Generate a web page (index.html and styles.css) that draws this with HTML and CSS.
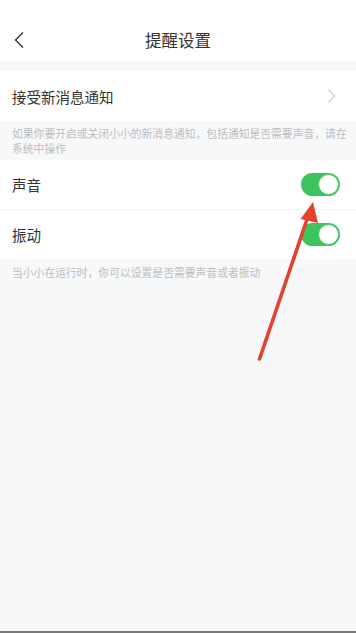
FILE: index.html
```html
<!DOCTYPE html>
<html lang="zh">
<head>
<meta charset="utf-8">
<link rel="stylesheet" href="styles.css">
</head>
<body>
<div class="page">
  <header class="nav">
    <svg class="back" width="12" height="18" viewBox="0 0 12 18"><path d="M10 1.5 L2.5 9 L10 16.5" fill="none" stroke="#333" stroke-width="1.4"/></svg>
    <div class="title">提醒设置</div>
  </header>
  <div class="gap"></div>
  <div class="row">
    <span class="label">接受新消息通知</span>
    <svg class="more" width="9" height="14" viewBox="0 0 9 14"><path d="M1.5 1 L7.5 7 L1.5 13" fill="none" stroke="#c9c9c9" stroke-width="1.1"/></svg>
  </div>
  <div class="note note-top">如果你要开启或关闭小小的新消息通知，包括通知是否需要声音，请在系统中操作</div>
  <div class="row row-line">
    <span class="label">声音</span>
    <span class="switch"><span class="knob"></span></span>
  </div>
  <div class="row">
    <span class="label">振动</span>
    <span class="switch"><span class="knob"></span></span>
  </div>
  <div class="note note-bottom">当小小在运行时，你可以设置是否需要声音或者振动</div>
  <svg class="arrow" width="356" height="633" viewBox="0 0 356 633">
    <line x1="259.5" y1="359" x2="307.5" y2="218" stroke="#e2432e" stroke-width="3.6" stroke-linecap="round"/>
    <polygon points="313,202 300.5,219 318,223" fill="#e2432e"/>
  </svg>
</div>
</body>
</html>
```
FILE: styles.css
```css
html, body {
  margin: 0;
  padding: 0;
}
body {
  width: 356px;
  height: 633px;
  overflow: hidden;
  background: #f7f8fa;
  font-family: "Noto Sans CJK SC", "Noto Sans", sans-serif;
}
.page {
  position: relative;
  height: 631px;
  border-bottom: 2px solid #7a7a7a;
  background: #f7f8fa;
}
.nav {
  position: relative;
  height: 61px;
  background: #fff;
  display: flex;
  align-items: flex-end;
  justify-content: center;
  box-sizing: border-box;
  padding-bottom: 10px;
}
.back {
  position: absolute;
  left: 13px;
  top: 31px;
}
.title {
  font-size: 16.5px;
  color: #333;
  line-height: 22px;
}
.gap {
  height: 10px;
}
.row {
  height: 49px;
  background: #fff;
  display: flex;
  align-items: center;
  justify-content: space-between;
  padding: 0 16px 0 12px;
}
.row:nth-of-type(2) {
  height: 50px;
}
.row-line {
  border-bottom: 1px solid #f2f2f2;
}
.label {
  font-size: 14.5px;
  color: #333;
}
.more {
  margin-right: 4px;
}
.note {
  font-size: 10.8px;
  color: #bdbdbd;
  line-height: 15px;
  padding: 0 8px 0 12px;
}
.note-top {
  height: 39px;
  box-sizing: border-box;
  padding-top: 5px;
}
.note-bottom {
  padding-top: 6px;
}
.switch {
  width: 39px;
  height: 23px;
  border-radius: 12px;
  background: #3cc55d;
  display: flex;
  align-items: center;
  justify-content: flex-end;
  box-sizing: border-box;
  padding-right: 1px;
}
.knob {
  width: 21px;
  height: 21px;
  border-radius: 50%;
  background: #fff;
  box-sizing: border-box;
  border: 1px solid #4cc96a;
}
.arrow {
  position: absolute;
  left: 0;
  top: 0;
  pointer-events: none;
}
```
